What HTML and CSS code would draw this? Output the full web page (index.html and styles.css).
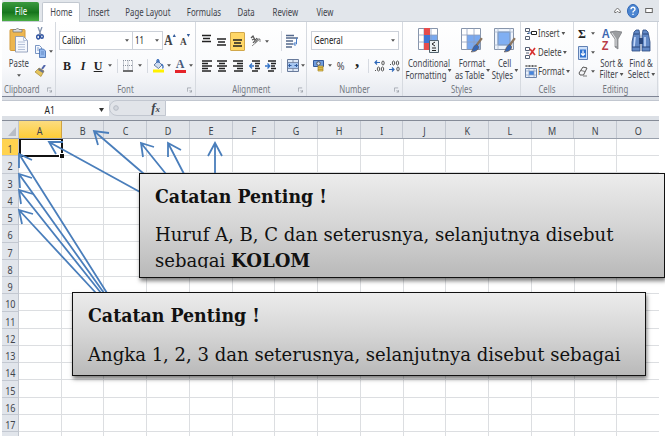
FILE: index.html
```html
<!DOCTYPE html>
<html lang="id">
<head>
<meta charset="utf-8">
<title>Kolom dan baris</title>
<link rel="stylesheet" href="styles.css">
</head>
<body>
<svg width="0" height="0" class="defs">
  <defs>
    <symbol id="dd" viewBox="0 0 5 3"><path d="M0 0h5L2.500 3z" fill="#555"/></symbol>
    <symbol id="launch" viewBox="0 0 6 6"><path d="M.5 5V.5H5M3 3l2.500 2.500M5.500 3v2.500H3" fill="none" stroke="#8d939b" stroke-width=".8"/></symbol>
    <symbol id="table" viewBox="0 0 20 24"><path d="M.5.5h19v21H.5z" fill="#fff" stroke="#8795ab"/><path d="M6 7h13v14H6z" fill="#79a9f0"/><path d="M0 7h20M0 14h20M6 0v22M13 0v22" stroke="#8fa0bc" stroke-width=".8"/></symbol>
    <symbol id="brush" viewBox="0 0 12 15"><path d="M11 1L6 8" stroke="#8b7660" stroke-width="2.200"/><path d="M6 7l2 2c0 4-4 5-7 5 2-2 1-5 5-7z" fill="#3566b5" stroke="#6d5540" stroke-width=".6"/></symbol>
  </defs>
</svg>
<div class="app">
  <nav class="tabs">
    <div class="tab file"><span class="t">File</span></div>
    <div class="tab home"><span class="t">Home</span></div>
    <div class="tab insert"><span class="t">Insert</span></div>
    <div class="tab page"><span class="t">Page Layout</span></div>
    <div class="tab formulas"><span class="t">Formulas</span></div>
    <div class="tab data"><span class="t">Data</span></div>
    <div class="tab review"><span class="t">Review</span></div>
    <div class="tab view"><span class="t">View</span></div>
    <div class="window-tools">
      <svg width="7" height="7" viewBox="0 0 7 7"><path d="M.7 4L3.500 1l2.800 3v1.500H4.800L3.500 4.200 2.200 5.500H.7z" fill="#fff" stroke="#666" stroke-width=".9"/></svg>
      <svg width="12" height="14" viewBox="0 0 12 14"><ellipse cx="6" cy="7" rx="5.500" ry="6.500" fill="#4c86d2" stroke="#2e66b5"/><path d="M4 5.200Q4 3.300 6 3.300T8 5.200Q8 6.300 6.700 7 6 7.400 6 8.500M6 9.700v1.300" fill="none" stroke="#fff" stroke-width="1.400"/></svg>
      <svg width="8" height="7" viewBox="0 0 8 7"><rect x=".7" y="1.500" width="6.600" height="4" fill="#fff" stroke="#666"/></svg>
    </div>
  </nav>

  <div class="ribbon">
    <section class="group clipboard">
      <div class="controls clip-grid">
        <div class="big">
          <svg width="20" height="27" viewBox="0 0 20 27"><rect x="1" y="2.500" width="15" height="21" rx="1" fill="#edb64f" stroke="#d29a3b"/><path d="M4 5V2.500h3Q8.500-.5 10 2.500h3V5z" fill="#d9dce0" stroke="#777" stroke-width=".8"/><path d="M6.500 9.500h8l4 4V25h-12z" fill="#f5f8fd" stroke="#8090b0" stroke-width=".8"/><path d="M14.500 9.500v4h4M9 15h7M9 17.500h7M9 20h7M9 22.500h7" fill="none" stroke="#a3b3cf" stroke-width=".8"/></svg>
          <span class="t">Paste</span>
          <svg class="dd"><use href="#dd"/></svg>
        </div>
        <div class="clip-tools">
          <div><svg width="8" height="13" viewBox="0 0 8 13"><path d="M2 0l3 8M6 0L3 8" stroke="#8292ad" stroke-width="1.300"/><ellipse cx="2.200" cy="10" rx="1.500" ry="2" fill="none" stroke="#2a4f9e" stroke-width="1.400"/><ellipse cx="5.900" cy="9.500" rx="1.400" ry="1.800" fill="none" stroke="#2a4f9e" stroke-width="1.400"/></svg></div>
          <div class="copy"><svg width="11" height="13" viewBox="0 0 11 13"><path d="M.5.500h4l2 2V8.500h-6z" fill="#f4f8ff" stroke="#5a7db5" stroke-width=".8"/><path d="M4.500 4h4l2 2v6.500h-6z" fill="#94b9ee" stroke="#3f69ad" stroke-width=".8"/><path d="M2 3h2M2 5h2M6 7h3M6 9h3" stroke="#5279b5" stroke-width=".7"/></svg><svg class="dd"><use href="#dd"/></svg></div>
          <div><svg width="11" height="12" viewBox="0 0 11 12"><path d="M7 4l3-4" stroke="#5267ab" stroke-width="2"/><path d="M4 3l5 3-3 5.500L0 7z" fill="#e5c45c" stroke="#a68834" stroke-width=".7"/><path d="M4 3l5 3-1 2-5-3z" fill="#69738e"/></svg></div>
        </div>
      </div>
      <footer><span class="t">Clipboard</span><svg class="launch"><use href="#launch"/></svg></footer>
    </section>

    <section class="group font">
      <div class="controls">
        <div class="row font-one">
          <div class="combo"><span class="t left">Calibri</span><svg class="dd"><use href="#dd"/></svg></div>
          <div class="combo"><span class="t left">11</span><svg class="dd"><use href="#dd"/></svg></div>
          <div class="grow">A<svg width="4" height="3" viewBox="0 0 4 3"><path d="M0 3l2-3 2 3z" fill="#345d9c"/></svg></div>
          <div class="grow shrink">A<svg width="4" height="3" viewBox="0 0 4 3"><path d="M0 0l2 3 2-3z" fill="#345d9c"/></svg></div>
        </div>
        <div class="row font-two">
          <b class="serif">B</b><i class="serif">I</i><u class="serif bold">U</u>
          <svg class="dd"><use href="#dd"/></svg><i class="sep"></i>
          <svg width="10" height="12" viewBox="0 0 10 12"><path d="M.5.500v10M5 .5v10M9.500.500v10M0 .5h10M0 5.500h10" stroke="#8b929e" stroke-dasharray="1 1"/><path d="M0 11h10" stroke="#333" stroke-width="1.400"/></svg>
          <svg class="dd"><use href="#dd"/></svg><i class="sep"></i>
          <svg width="11" height="14" viewBox="0 0 11 14"><path d="M1 6l4-4 4 4-3.500 3.500z" fill="#cfdcf0" stroke="#4a6491" stroke-width=".8"/><path d="M4 4V1.500Q5-.5 6 2v2M8.500 5Q11 7 9.500 9.500" fill="none" stroke="#2f66b7" stroke-width="1.200"/><path d="M0 10.500h11v3H0z" fill="#fff100"/></svg>
          <svg class="dd"><use href="#dd"/></svg>
          <div class="font-color">A</div>
          <svg class="dd"><use href="#dd"/></svg>
        </div>
      </div>
      <footer><span class="t">Font</span><svg class="launch"><use href="#launch"/></svg></footer>
    </section>

    <section class="group alignment">
      <div class="controls">
        <div class="row align-one">
          <svg width="9" height="14" viewBox="0 0 9 14"><path d="M0 1.500h9M1 4.500h7M0 7.500h9" stroke="#222" stroke-width="1.500"/></svg>
          <svg width="9" height="14" viewBox="0 0 9 14"><path d="M0 5h9M1 8h7M0 11h9" stroke="#222" stroke-width="1.500"/></svg>
          <div class="active"><svg width="9" height="14" viewBox="0 0 9 14"><path d="M0 6h9M1 9h7M0 12h9" stroke="#222" stroke-width="1.500"/></svg></div>
          <svg width="11" height="12" viewBox="0 0 11 12"><path d="M1 3l2-2 2 4M2 5l2-1M3 8l4-5M5 8l3-4" fill="none" stroke="#555" stroke-width="1.200"/><path d="M2 11l8-7M10 7V4H7" fill="none" stroke="#888"/></svg>
          <svg class="dd"><use href="#dd"/></svg><i class="sep"></i>
          <svg width="12" height="14" viewBox="0 0 12 14"><path d="M0 1.500h8M0 4h12M0 7h7M0 10h7M0 13h6" stroke="#54698c" stroke-width="1.300"/><path d="M10.500 4v6H8M9.500 8l-2 2 2 2" fill="none" stroke="#4b7fc8"/></svg>
        </div>
        <div class="row align-two">
          <svg width="10" height="12" viewBox="0 0 10 12"><path d="M0 1h10M0 3.500h6M0 6h10M0 8.500h6M0 11h9" stroke="#222" stroke-width="1.300"/></svg>
          <svg width="10" height="12" viewBox="0 0 10 12"><path d="M0 1h10M2 3.500h6M0 6h10M2 8.500h6M1 11h8" stroke="#222" stroke-width="1.300"/></svg>
          <svg width="10" height="12" viewBox="0 0 10 12"><path d="M0 1h10M4 3.500h6M0 6h10M4 8.500h6M1 11h9" stroke="#222" stroke-width="1.300"/></svg>
          <svg width="11" height="12" viewBox="0 0 11 12"><path d="M3 1h8M6 3.500h5M6 6h4M6 8.500h5M3 11h6" stroke="#222" stroke-width="1.300"/><path d="M5 6H1M3 3.500L.7 6 3 8.500" fill="none" stroke="#3474c8" stroke-width="1.300"/></svg>
          <svg width="11" height="12" viewBox="0 0 11 12"><path d="M3 1h8M6 3.500h5M6 6h4M6 8.500h5M3 11h6" stroke="#222" stroke-width="1.300"/><path d="M0 6h4M2.500 3.500L4.800 6 2.500 8.500" fill="none" stroke="#3474c8" stroke-width="1.300"/></svg>
          <i class="sep"></i>
          <svg width="12" height="13" viewBox="0 0 12 13"><path d="M.5.500h11v12H.5z" fill="#dfe9f7" stroke="#687a9b"/><path d="M0 3.500h12M0 9.500h12M6 0v3.500M6 9.500V13" stroke="#687a9b" stroke-width=".8"/><path d="M1 4h10v5H1z" fill="#a7c6f0"/><path d="M2 6.500h2.500M7.500 6.500H10M3 5L1.500 6.500 3 8M9 5l1.500 1.500L9 8" fill="none" stroke="#234f93" stroke-width=".9"/></svg>
          <svg class="dd"><use href="#dd"/></svg>
        </div>
      </div>
      <footer><span class="t">Alignment</span><svg class="launch"><use href="#launch"/></svg></footer>
    </section>

    <section class="group number">
      <div class="controls">
        <div class="row"><div class="combo general"><span class="t left">General</span><svg class="dd"><use href="#dd"/></svg></div></div>
        <div class="row number-two">
          <svg width="12" height="13" viewBox="0 0 12 13"><path d="M.5 1.500h10v6H.5z" fill="#709ddd" stroke="#335a9d"/><circle cx="5.500" cy="4.500" r="1.800" fill="#d8e6fb"/><path d="M5 7h5v5H5z" fill="#eacb56" stroke="#a78426" stroke-width=".7"/><path d="M5 8.700h5M5 10.400h5" stroke="#a78426" stroke-width=".7"/></svg>
          <svg class="dd"><use href="#dd"/></svg>
          <span class="percent">%</span><b class="comma">,</b><i class="sep"></i>
          <svg width="11" height="12" viewBox="0 0 11 12"><path d="M6 2.500H1M3 .5l-2 2 2 2" fill="none" stroke="#2e68b9" stroke-width="1.200"/><ellipse cx="9" cy="3" rx="1.200" ry="2"/><path d="M1 10.500h1"/><ellipse cx="4.500" cy="9" rx="1.200" ry="2"/><ellipse cx="8.500" cy="9" rx="1.200" ry="2"/></svg>
          <svg width="11" height="12" viewBox="0 0 11 12"><path d="M1 4.500h1"/><ellipse cx="4.500" cy="3" rx="1.200" ry="2"/><ellipse cx="8.500" cy="3" rx="1.200" ry="2"/><path d="M0 9.500h5M3 7.500l2 2-2 2" fill="none" stroke="#2e68b9" stroke-width="1.200"/><ellipse cx="9" cy="9" rx="1.200" ry="2"/></svg>
        </div>
      </div>
      <footer><span class="t">Number</span><svg class="launch"><use href="#launch"/></svg></footer>
    </section>

    <section class="group styles">
      <div class="controls big-row">
        <div class="big cond">
          <svg width="22" height="25" viewBox="0 0 22 25"><use href="#table" width="20" height="24"/><path d="M6 0h6v7H6zM6 15h6v7H6z" fill="#e64c4c"/><path d="M6 7h6v8H6z" fill="#3f75d4"/><path d="M11.500 12.500h9v12h-9z" fill="#eaf1f3" stroke="#52636e"/><path d="M17 14l-3 2 3 2M14 20h4M14 22.500h4" stroke="#222" fill="none"/></svg>
          <span class="t">Conditional</span><span class="t">Formatting<svg class="dd"><use href="#dd"/></svg></span>
        </div>
        <div class="big fmt">
          <svg width="22" height="25" viewBox="0 0 22 25"><use href="#table" width="20" height="24"/><use href="#brush" x="9" y="9" width="13" height="16"/></svg>
          <span class="t">Format</span><span class="t">as Table<svg class="dd"><use href="#dd"/></svg></span>
        </div>
        <div class="big cell">
          <svg width="22" height="25" viewBox="0 0 22 25"><path d="M.5.500h19v21H.5z" fill="#edf3fc" stroke="#8795ab"/><path d="M4 4h12v13H4z" fill="#80aff3" stroke="#5f87c4"/><path d="M4 0v22M16 0v22M0 4h20M0 17h20" stroke="#a1afc4" stroke-width=".7"/><use href="#brush" x="9" y="9" width="13" height="16"/></svg>
          <span class="t">Cell</span><span class="t">Styles<svg class="dd"><use href="#dd"/></svg></span>
        </div>
      </div>
      <footer><span class="t">Styles</span></footer>
    </section>

    <section class="group cells">
      <div class="controls stack">
        <div><svg width="12" height="12" viewBox="0 0 12 12"><path d="M.5.500h4v3h-4zM.5 8.500h4v3h-4zM2 5.500h2" fill="#fff" stroke="#566174"/><path d="M6.500 3.500h5v3h-5z" fill="#fff" stroke="#222"/><path d="M6 5H3" stroke="#2a65b5"/></svg><span class="t left">Insert<svg class="dd"><use href="#dd"/></svg></span></div>
        <div><svg width="12" height="12" viewBox="0 0 12 12"><path d="M.5.500h4v3h-4zM.5 8.500h4v3h-4zM1 6h3" fill="#fff" stroke="#566174"/><path d="M5 2l5 6M10 1L5 8" stroke="#d83030" stroke-width="1.700"/></svg><span class="t left">Delete<svg class="dd"><use href="#dd"/></svg></span></div>
        <div><svg width="12" height="13" viewBox="0 0 12 13"><path d="M1 1h10M1 0v2M4.300 0v2M7.600 0v2M11 0v2" stroke="#444" stroke-width=".8"/><path d="M.5 3.500h11v9H.5z" fill="#e9f0fb" stroke="#6d83a8"/><path d="M4 6h5v4H4z" fill="#4685dd"/><path d="M1 6h10M1 10h10M4 4v8M9 4v8" stroke="#899ebf" stroke-width=".7"/></svg><span class="t left">Format<svg class="dd"><use href="#dd"/></svg></span></div>
      </div>
      <footer><span class="t">Cells</span></footer>
    </section>

    <section class="group editing">
      <div class="controls edit-grid">
        <div class="edit-tools">
          <div><b class="sigma">Σ</b><svg class="dd"><use href="#dd"/></svg></div>
          <div><svg width="10" height="14" viewBox="0 0 10 14"><path d="M.5.500h9v13h-9z" fill="#cfe1fa" stroke="#6181b4"/><path d="M2 3.500h6v8H2z" fill="#2f72d1"/><path d="M5 4.500v5M3 7.500l2 2 2-2" fill="none" stroke="#fff" stroke-width="1.200"/></svg><svg class="dd"><use href="#dd"/></svg></div>
          <div><svg width="11" height="11" viewBox="0 0 11 11"><path d="M1 7l4-6 4 1-3.500 7H2z" fill="#f5f6f9" stroke="#555"/><path d="M3 4.500l4 1M5 10h4" stroke="#777"/></svg><svg class="dd"><use href="#dd"/></svg></div>
        </div>
        <div class="big sort">
          <div class="sort-icon"><div><b>A</b><b>Z</b></div><svg width="12" height="23" viewBox="0 0 12 23"><path d="M0 4q5-2 12 0L8 11v10l-3-2v-8z" fill="#9b9da0" stroke="#77797c" stroke-width=".7"/><path d="M2 5l4 6v7" stroke="#e0e1e3" fill="none"/></svg></div>
          <span class="t">Sort &amp;</span><span class="t">Filter<svg class="dd"><use href="#dd"/></svg></span>
        </div>
        <div class="big find">
          <svg width="20" height="23" viewBox="0 0 20 23"><path d="M3 3l2-2h3l1 6v15H1v-9zM17 3l-2-2h-3l-1 6v15h8v-9z" fill="#6289c6" stroke="#29477d" stroke-width=".8"/><path d="M8 9h4v6H8z" fill="#29477d"/><path d="M4 8L3 18M14 8v10" stroke="#c4d9fb" stroke-width="1.600"/><path d="M3 5h5M12 5h5M1 18h8M11 18h8" stroke="#29477d"/></svg>
          <span class="t">Find &amp;</span><span class="t">Select<svg class="dd"><use href="#dd"/></svg></span>
        </div>
      </div>
      <footer><span class="t">Editing</span></footer>
    </section>
  </div>

  <div class="formula-bar">
    <div class="name-box"><span class="t">A1</span><svg width="5" height="4" viewBox="0 0 5 4"><path d="M0 0h5L2.500 4z" fill="#333"/></svg></div>
    <div class="fx"><svg width="6" height="6" viewBox="0 0 6 6"><circle cx="3" cy="3" r="2.300" fill="#d3d7de" stroke="#b6bbc4"/></svg><i><b>f</b><small>x</small></i></div>
    <div class="input"></div>
  </div>

  <div class="sheet">
    <div class="heads">
      <div class="corner"><svg width="8" height="9" viewBox="0 0 8 9"><path d="M8 0v9H0z" fill="#b8bdc6"/></svg></div>
      <div class="sel"><span class="t">A</span></div><div><span class="t">B</span></div><div><span class="t">C</span></div><div><span class="t">D</span></div><div><span class="t">E</span></div><div><span class="t">F</span></div><div><span class="t">G</span></div><div><span class="t">H</span></div><div><span class="t">I</span></div><div><span class="t">J</span></div><div><span class="t">K</span></div><div><span class="t">L</span></div><div><span class="t">M</span></div><div><span class="t">N</span></div><div><span class="t">O</span></div>
    </div>
    <div class="body">
      <div class="numbers">
        <div class="sel"><span class="t">1</span></div><div><span class="t">2</span></div><div><span class="t">3</span></div><div><span class="t">4</span></div><div><span class="t">5</span></div><div><span class="t">6</span></div><div><span class="t">7</span></div><div><span class="t">8</span></div><div><span class="t">9</span></div><div><span class="t">10</span></div><div><span class="t">11</span></div><div><span class="t">12</span></div><div><span class="t">13</span></div><div><span class="t">14</span></div><div><span class="t">15</span></div><div><span class="t">16</span></div><div><span class="t">17</span></div><div></div>
      </div>
      <div class="grid"><div class="cursor"></div></div>
    </div>
  </div>
</div>

<svg class="arrows" width="665" height="442" viewBox="0 0 665 442">
  <g fill="none" stroke="#4a7ebb" stroke-width="1.800">
    <path d="M140 192L49 142M63 142H49l7 12"/>
    <path d="M144 174L94 131M109 133L94 131l4 14"/>
    <path d="M166 174L141 143M154 147l-13-4 2 14"/>
    <path d="M184 174L168 143M181 150l-13-7v14"/>
    <path d="M215 174V143M208 156l7-13 7 13"/>
    <path d="M107 293L19 154M32 160l-13-6v14"/>
    <path d="M104 293L19 174M32 178l-13-4 1 14"/>
    <path d="M101 293L19 190M33 194l-14-4 2 14"/>
    <path d="M96 293L19 210M33 214l-14-4 3 14"/>
  </g>
</svg>

<article class="note columns">
  <h2><span>Catatan Penting !</span></h2>
  <p><span class="line huruf">Huruf A, B, C dan seterusnya, selanjutnya disebut</span><span class="line sebagai">sebagai <b>KOLOM</b></span></p>
</article>
<article class="note rows">
  <h2><span>Catatan Penting !</span></h2>
  <p><span class="line angka">Angka 1, 2, 3 dan seterusnya, selanjutnya disebut sebagai</span></p>
</article>
</body>
</html>
```
FILE: styles.css
```css
* { box-sizing: border-box; }
body {
  margin: 0;
  width: 665px;
  height: 442px;
  position: relative;
  overflow: hidden;
  background: #fff;
  font: 10px/11px "Noto Sans", sans-serif;
  color: #3f444c;
}
svg { display: block; flex: none; }
.defs { position: absolute; }
.app { width: 657px; margin-left: 2px; }
.t { display: inline-block; transform: scaleX(.78); white-space: nowrap; }
.t.left { transform-origin: left; }
.dd { width: 4px; height: 3px; }
.t .dd { display: inline-block; width: 5px; margin-left: 2px; vertical-align: 2px; }
.launch { width: 5px; height: 6px; }

/* Tabs */
.tabs { display: flex; height: 22px; background: #e2e6eb; border-bottom: 1px solid #c8ced6; }
.tab { height: 22px; display: flex; align-items: center; justify-content: center; padding-top: 3px; }
.file { width: 37px; margin-top: 2px; height: 19px; padding: 0; color: #fff; background: linear-gradient(#3b9a40, #16751d 55%, #48ad42); border-radius: 2px 2px 0 0; }
.home { width: 38px; margin: 2px 0 0 3px; height: 20px; padding: 0; background: #fff; border: 1px solid #c2c8d0; border-bottom: 0; border-radius: 2px 2px 0 0; }
.insert { width: 38px; }
.page { width: 60px; }
.formulas { width: 51px; }
.data { width: 34px; }
.review { width: 44px; }
.view { width: 36px; }
.window-tools { display: flex; align-items: center; gap: 6px; margin-left: auto; padding-right: 6px; }

/* Ribbon */
.ribbon { display: flex; height: 75px; background: linear-gradient(#fff, #f9fafc 60%, #e7eaf0); border-bottom: 1px solid #7e8494; }
.group { display: flex; flex-direction: column; border-right: 1px solid #d6dae0; }
.clipboard { width: 54px; }
.font { width: 140px; }
.alignment { width: 111px; }
.number { width: 96px; }
.styles { width: 118px; }
.cells { width: 53px; }
.editing { width: 84px; }
.controls { height: 60px; }
footer { display: flex; justify-content: center; align-items: center; height: 14px; color: #73777e; position: relative; }
footer .launch { position: absolute; right: 3px; top: 5px; }
.clipboard footer { padding-right: 13px; }
.row { display: grid; align-items: center; justify-items: center; height: 19px; }
.row:first-child { margin-top: 9px; }
.row + .row { margin-top: 6px; }
.sep { width: 1px; height: 14px; background: #d6dae1; }
.combo { display: flex; align-items: center; justify-content: space-between; width: 100%; height: 19px; padding: 0 3px 0 2px; background: #fff; border: 1px solid #ccd1d9; color: #222; }
.combo + .combo { border-left: 0; }

.clip-grid { display: grid; grid-template-columns: 33px 21px; padding-top: 5px; }
.big { display: flex; flex-direction: column; align-items: center; }
.big .t { line-height: 11px; }
.clipboard .big .t { margin: 4px 0 5px; }
.clip-tools { display: grid; grid-template-rows: 13px 22px 18px; align-items: center; }
.clip-tools > div { display: flex; align-items: center; }
.clip-tools > div:first-child { padding-left: 1px; }
.copy { gap: 3px; }

.font-one { grid-template-columns: 74px 30px 15px 14px; padding-left: 3px; justify-content: start; }
.grow { display: flex; align-items: flex-start; font: 700 14px/14px "Liberation Serif", serif; color: #444; transform: scaleX(.85); }
.shrink { font-size: 11px; }
.font-two { grid-template-columns: 16px 16px 14px 9px 7px 14px 9px 7px 14px 8px 14px 8px; padding-left: 3px; justify-content: start; }
.serif { font: 700 12px/12px "Liberation Serif", serif; color: #222; }
i.serif { font-style: italic; }
.font-color { width: 11px; height: 14px; font: 700 12px/11px "Liberation Serif", serif; text-align: center; color: #485a7d; border-bottom: 3px solid #e52329; }

.align-one { grid-template-columns: 15px 15px 16px 20px 4px 16px 13px; padding-left: 3px; justify-content: start; }
.align-one .sep { margin-left: 8px; height: 20px; }
.active { display: flex; align-items: center; justify-content: center; width: 15px; height: 19px; background: #ffd767; border: 1px solid #d1a74a; border-radius: 1px; }
.align-two { grid-template-columns: 15px 16px 15px 19px 12px 10px 14px 6px; padding-left: 3px; justify-content: start; }

.general { width: 88px; }
.number-two { grid-template-columns: 16px 6px 16px 16px 6px 16px 15px; justify-content: start; padding-left: 4px; }
.number-two svg { fill: none; stroke: #555; }
.number-two .dd { stroke: none; }
.percent { font: 11px/12px "Noto Sans", sans-serif; transform: scaleX(.85); }
.comma { font: 700 17px/10px "Liberation Serif", serif; margin-top: -8px; color: #222; }

.big-row { display: grid; grid-template-columns: 50px 36px 30px; justify-items: center; padding: 6px 0 0 1px; }
.big-row .big svg:first-child, .sort-icon, .find > svg { margin-bottom: 5px; }
.stack { display: grid; grid-template-rows: 19px 19px 19px; padding: 2px 0 0 4px; }
.stack > div { display: flex; align-items: center; gap: 1px; }
.stack .t { color: #444; }

.edit-grid { display: grid; grid-template-columns: 22px 31px 28px; }
.edit-tools { display: grid; grid-template-rows: 19px 19px 19px; padding: 2px 1px 0 4px; }
.edit-tools > div { display: flex; align-items: center; justify-content: space-between; }
.edit-grid .big { padding-top: 6px; }
.edit-grid .big .t { margin: 0 -5px; }
.find > svg { height: 25px; }
.sigma { font: 700 12px/12px "Liberation Serif", serif; color: #222; }
.sort-icon { display: flex; height: 25px; gap: 0; }
.sort-icon > div { display: flex; flex-direction: column; font: 700 13px/12px "Liberation Sans", sans-serif; transform: scaleX(.85); color: #3c67b2; }
.sort-icon b + b { color: #b93c47; }

/* Formula bar */
.formula-bar { display: flex; height: 24px; padding: 3px 0 4px; background: #dce0e6; border-bottom: 1px solid #858b97; }
.name-box { width: 107px; background: #fff; display: flex; align-items: center; padding: 2px 5px 0 41px; justify-content: space-between; color: #222; border-top: 1px solid #c2c7d0; font-size: 11px; }
.fx { width: 57px; display: flex; align-items: center; justify-content: space-between; padding: 0 5px 0 3px; border: 1px solid #c2c7d0; border-radius: 9px 0 0 9px; background: #e1e4e9; font: 13px/15px "Liberation Serif", serif; }
.fx small { font-size: 9px; font-weight: 700; }
.input { flex: 1; background: #fff; border-top: 1px solid #c2c7d0; }

/* Sheet */
.heads { display: grid; grid-template-columns: 17px repeat(15, 42.733px); height: 18px; background: #e1e4e9; border-bottom: 1px solid #989fab; width: 657px; overflow: hidden; }
.heads > div { display: flex; align-items: center; justify-content: center; padding-top: 2px; border-right: 1px solid #c1c6cf; }
.heads .corner { justify-content: flex-end; align-items: flex-end; padding: 0 2px 2px 0; }
.heads .sel { background: linear-gradient(#fbdc80, #ffcd36); border-color: #d0a341; }
.body { display: flex; height: 297px; }
.numbers { width: 17px; display: grid; grid-template-rows: repeat(17, 17.250px) 4px; background: #e1e5eb; }
.numbers > div { display: flex; align-items: center; justify-content: center; border-right: 1px solid #c1c6cf; border-bottom: 1px solid #c3c8d1; padding-top: 3px; }
.numbers > div:last-child { border-bottom: 0; padding: 0; }
.numbers .sel { background: #ffd34f; }
.numbers .t, .heads .t { font-size: 11px; transform: scaleX(.82); }
.grid {
  width: 640px;
  background:
    repeating-linear-gradient(to right, transparent 0 41.733px, #dcdee1 41.733px 42.733px),
    repeating-linear-gradient(to bottom, transparent 0 16.250px, #dcdee1 16.250px 17.250px);
}
.cursor { width: 44px; height: 18px; border: 2px solid #111; border-top-width: 1px; position: relative; }
.cursor::after { content: ""; position: absolute; right: -3px; bottom: -3px; width: 4px; height: 4px; background: #111; border: solid #fff; border-width: 1px 0 0 1px; }

/* Callouts */
.arrows { position: absolute; left: 0; top: 0; }
.note {
  position: absolute;
  border: 1.500px solid #111;
  background: linear-gradient(#ececec, #d5d5d5 50%, #b9b9b9);
  box-shadow: 1px 3px 4px rgba(0, 0, 0, .5);
  color: #111;
  font: 19px/26px "DejaVu Serif Condensed", "DejaVu Serif", serif;
  font-stretch: condensed;
  overflow: hidden;
}
.note h2 { margin: 0; font-size: 19px; line-height: 26px; font-weight: 700; white-space: nowrap; }
.note h2 span, .line { display: block; width: max-content; transform-origin: left; white-space: nowrap; }
.note h2 span { transform: scaleX(1.018); }
.line { transform: scaleX(1.056); }
.note p { margin: 0; }
.columns { left: 139px; top: 173px; width: 526px; height: 105px; padding: 9px 0 0 15px; }
.columns p { margin-top: 12px; height: 47px; overflow: hidden; }
.rows { left: 72px; top: 292px; width: 574px; height: 84px; padding: 9px 0 0 15px; }
.rows p { margin-top: 13px; }
```
